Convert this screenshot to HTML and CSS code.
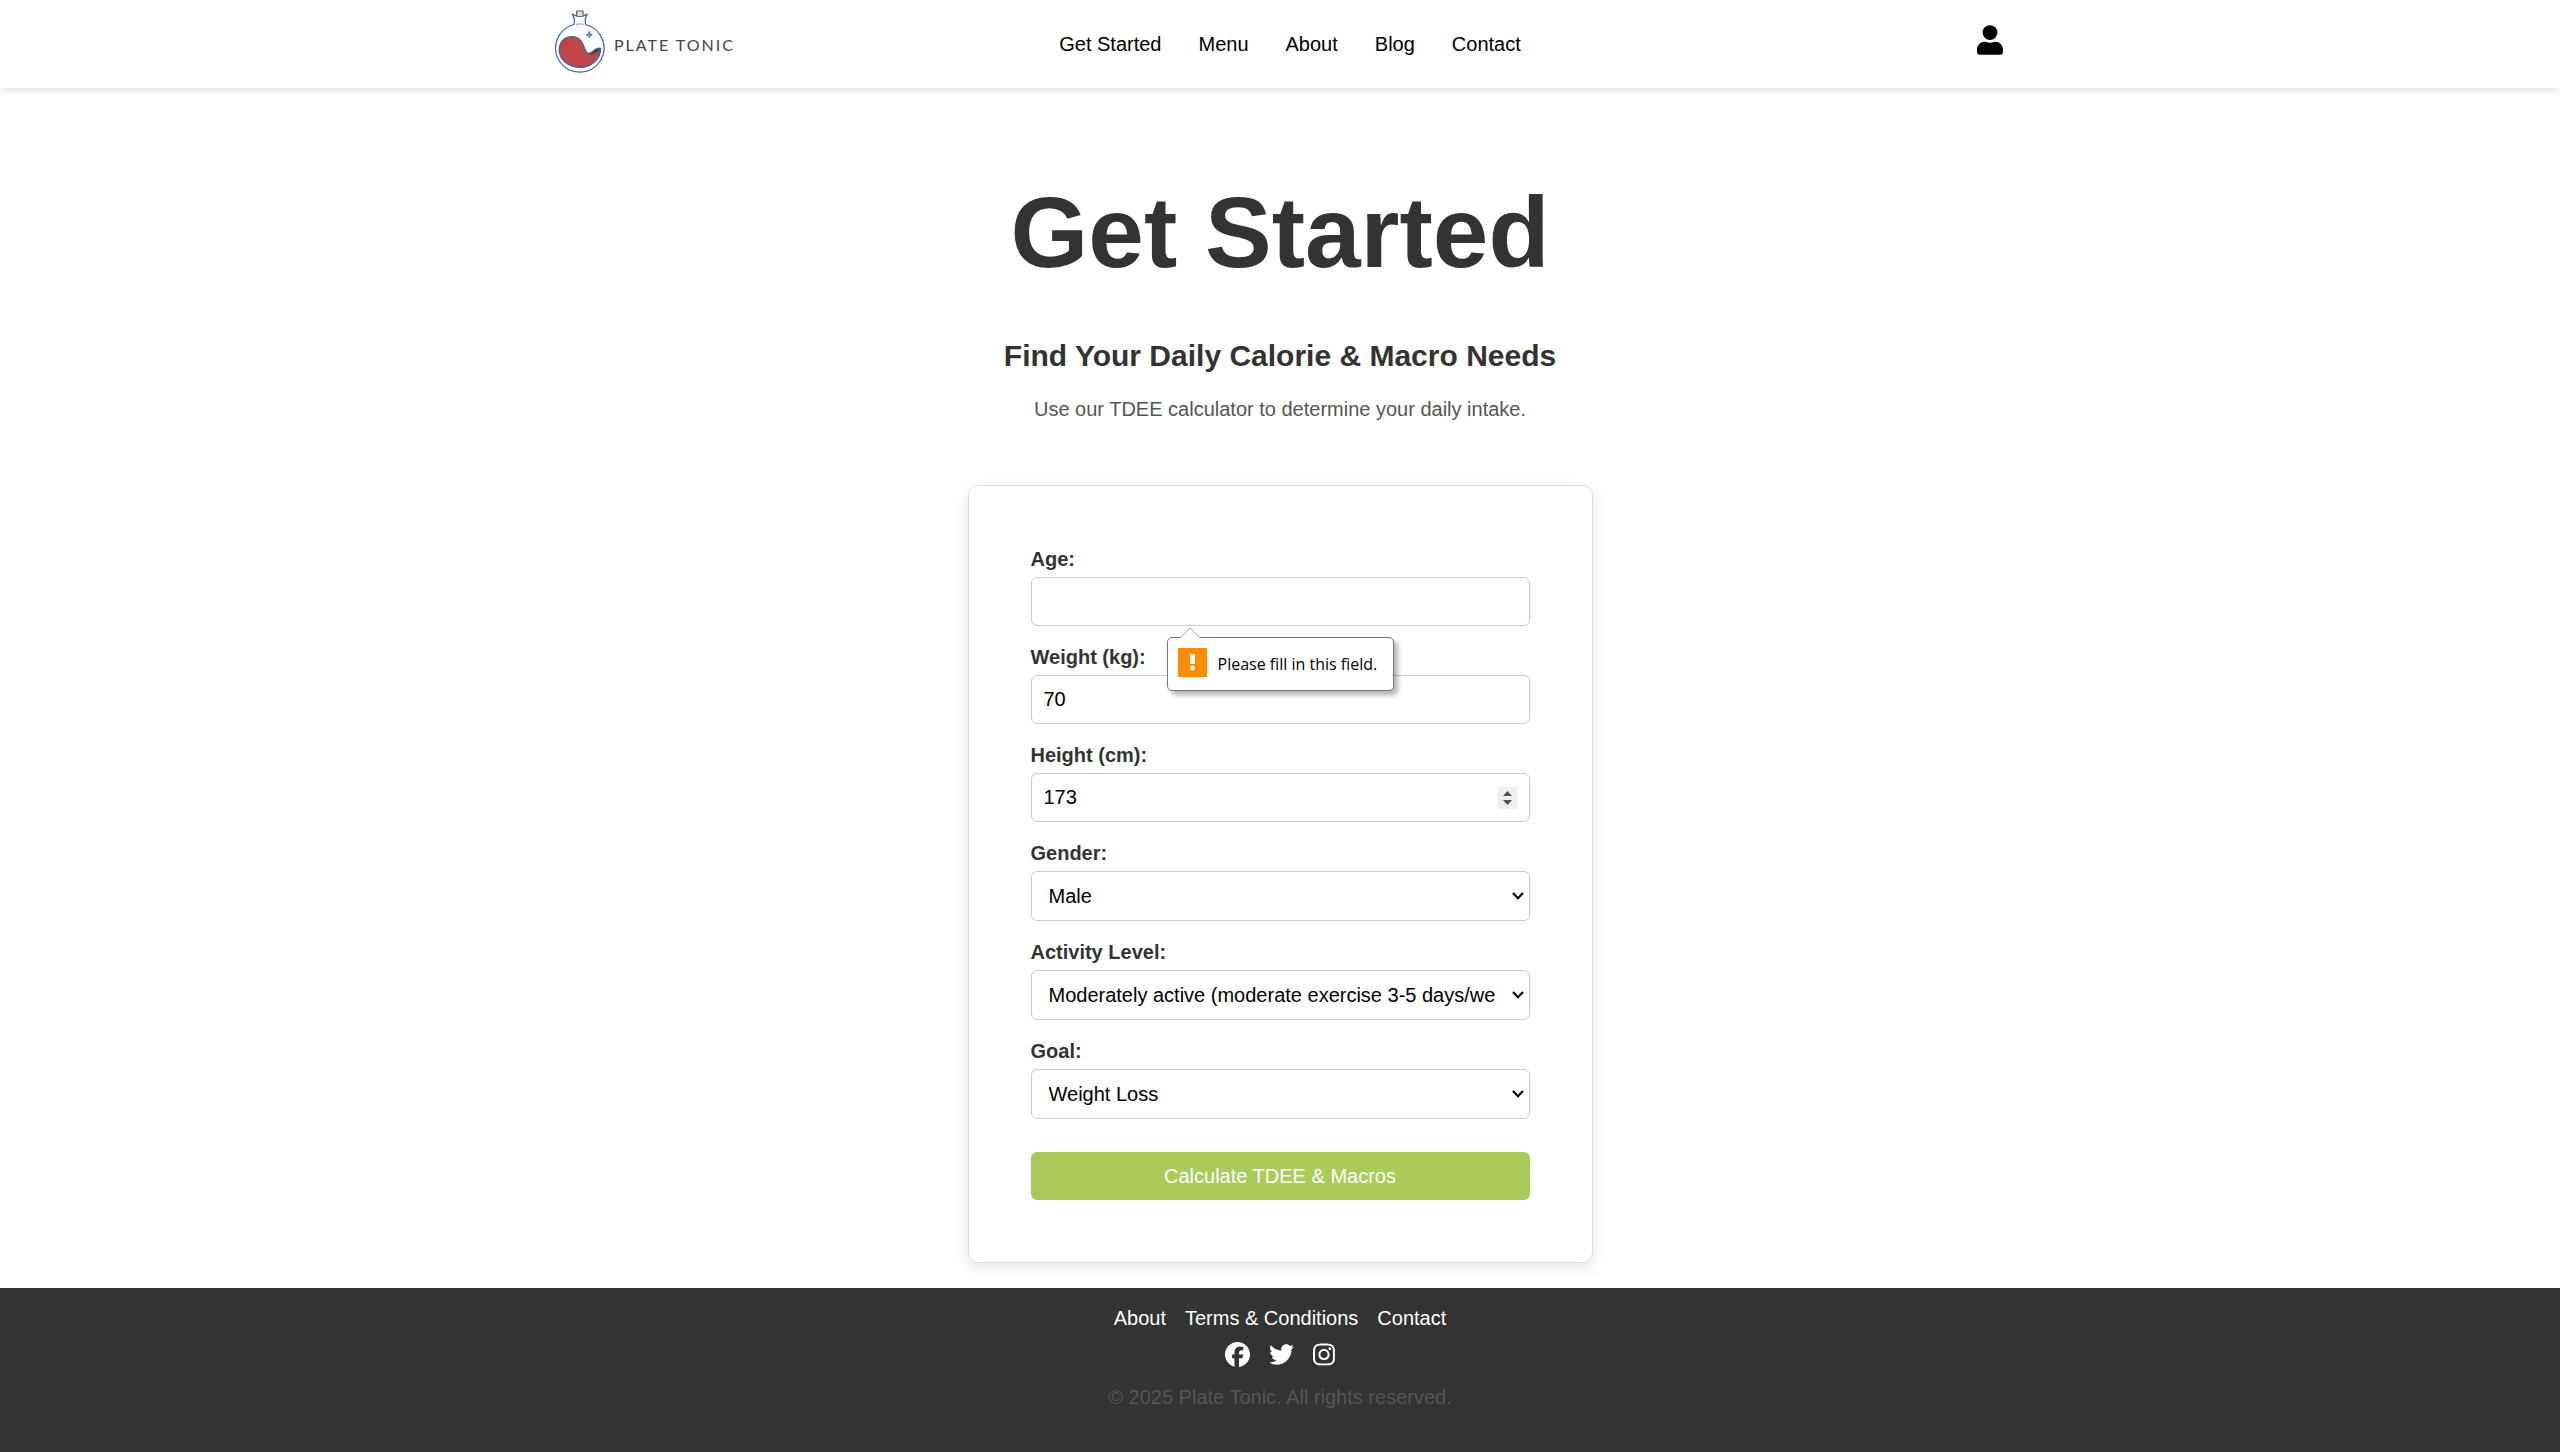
FILE: index.html
```html
<!DOCTYPE html>
<html lang="en">
<head>
<meta charset="utf-8">
<title>Get Started | Plate Tonic</title>
<meta name="viewport" content="width=device-width, initial-scale=1">
<link rel="stylesheet" href="styles.css">
</head>
<body>
<header class="site-header">
  <div class="header-inner">
    <a class="logo" href="#" aria-label="Plate Tonic">
      <svg width="200" height="68" viewBox="0 0 200 68">
        <g fill="none" stroke="#3a63a3" stroke-width="1.2" stroke-linecap="round" stroke-linejoin="round">
          <path d="M19 14.500C19.800 10 19.800 8 18 6L17.300 4Q21 6.500 24.800 6.500T32.200 4L31.500 6C29.800 8 29.800 10 30.600 14.500A24.200 24.200 0 1 1 19 14.500Z" fill="#fff"/>
          <path d="M21.700 6V1H28V6" fill="#f3dfba"/>
          <path d="M21.500 14.300Q25 13.300 28 14.300" stroke-width=".7"/>
          <path d="M4.200 40C4.200 32 9 26.700 17 26.700C30 26.700 28 42 34 44C39 45.500 44 42 45.600 38.500C46 48 37 57.400 25 57.400C13 57.400 4.200 49 4.200 40Z" fill="#bf4547"/>
          <path d="M32.500 43.300C38 43.500 38 37.700 45.600 38C44.500 42 38 46 32.500 43.300Z" fill="#7d3038" stroke-width=".8"/>
          <path d="M34.300 21.800L35.200 23.900L37.300 24.800L35.200 25.700L34.300 27.800L33.400 25.700L31.300 24.800L33.400 23.900Z" fill="#7fae86" stroke-width=".9"/>
        </g>
        <text class="logo-text" x="59" y="41">PLATE TONIC</text>
      </svg>
    </a>
    <nav class="main-nav" aria-label="Main">
      <a href="#">Get Started</a>
      <a href="#">Menu</a>
      <a href="#">About</a>
      <a href="#">Blog</a>
      <a href="#">Contact</a>
    </nav>
    <a class="account" href="#" aria-label="Account">
      <svg width="26" height="30" viewBox="0 0 448 512"><path d="M224 256A128 128 0 1 0 224 0a128 128 0 1 0 0 256zm89.600 32h-16.700c-22.200 10.200-46.900 16-72.900 16s-50.600-5.800-72.900-16h-16.700C60.200 288 0 348.200 0 422.400V464c0 26.500 21.500 48 48 48h352c26.500 0 48-21.500 48-48v-41.600c0-74.200-60.200-134.400-134.400-134.400z"/></svg>
    </a>
  </div>
</header>

<main class="page">
  <h1>Get Started</h1>
  <h2>Find Your Daily Calorie &amp; Macro Needs</h2>
  <p class="intro">Use our TDEE calculator to determine your daily intake.</p>

  <form class="card" novalidate>
    <div class="field">
      <label for="age">Age:</label>
      <input id="age" type="number" required aria-describedby="age-error">
      <div class="tooltip" id="age-error" role="alert">
        <svg class="tooltip-arrow" width="22" height="12" viewBox="0 0 22 12"><path d="M0 12L11 1L22 12Z" fill="#fff"/><path d="M1 11L11 1L21 11" fill="none" stroke="#aaa"/></svg>
        <svg width="29" height="29" viewBox="0 0 29 29"><rect width="29" height="29" rx="1" fill="#ff8c00"/><path d="M12 6h5v10h-5z" fill="#fff"/><circle cx="14.500" cy="20" r="2.400" fill="#fff"/></svg>
        <span>Please fill in this field.</span>
      </div>
    </div>
    <div class="field">
      <label for="weight">Weight (kg):</label>
      <input id="weight" type="number" value="70">
    </div>
    <div class="field">
      <label for="height">Height (cm):</label>
      <input id="height" class="with-spinner" type="number" value="173">
    </div>
    <div class="field">
      <label for="gender">Gender:</label>
      <select id="gender"><option>Male</option><option>Female</option></select>
    </div>
    <div class="field">
      <label for="activity">Activity Level:</label>
      <select id="activity"><option>Moderately active (moderate exercise 3-5 days/week)</option></select>
    </div>
    <div class="field">
      <label for="goal">Goal:</label>
      <select id="goal"><option>Weight Loss</option></select>
    </div>
    <button type="submit">Calculate TDEE &amp; Macros</button>
  </form>
</main>

<footer class="site-footer">
  <nav class="footer-nav" aria-label="Footer">
    <a href="#">About</a>
    <a href="#">Terms &amp; Conditions</a>
    <a href="#">Contact</a>
  </nav>
  <div class="social">
    <a href="#" aria-label="Facebook"><svg width="25" height="25" viewBox="0 0 512 512"><path d="M512 256C512 114.600 397.400 0 256 0S0 114.600 0 256c0 120 82.700 220.800 194.200 248.500V334.200h-52.800V256h52.800v-33.700c0-87.100 39.400-127.500 125-127.500 16.200 0 44.200 3.200 55.700 6.400V172c-6-.6-16.500-1-29.600-1-42 0-58.200 15.900-58.200 57.200V256h83.600l-14.400 78.200H287v175.900C413.800 494.800 512 386.900 512 256z"/></svg></a>
    <a href="#" aria-label="Twitter"><svg width="25" height="25" viewBox="0 0 512 512"><path d="M459.370 151.716c.325 4.548.325 9.097.325 13.645 0 138.720-105.583 298.558-298.558 298.558-59.452 0-114.680-17.219-161.137-47.106 8.447.974 16.568 1.299 25.340 1.299 49.055 0 94.213-16.568 130.274-44.832-46.132-.975-84.792-31.188-98.112-72.772 6.498.974 12.995 1.624 19.818 1.624 9.421 0 18.843-1.300 27.614-3.573-48.081-9.747-84.143-51.980-84.143-102.985v-1.299c13.969 7.797 30.214 12.670 47.431 13.319-28.264-18.843-46.781-51.005-46.781-87.391 0-19.492 5.197-37.360 14.294-52.954 51.655 63.675 129.300 105.258 216.365 109.807-1.624-7.797-2.599-15.918-2.599-24.040 0-57.828 46.782-104.934 104.934-104.934 30.213 0 57.502 12.670 76.670 33.137 23.715-4.548 46.456-13.320 66.599-25.340-7.798 24.366-24.366 44.833-46.132 57.827 21.117-2.273 41.584-8.122 60.426-16.243-14.292 20.791-32.161 39.308-52.628 54.253z"/></svg></a>
    <a href="#" aria-label="Instagram"><svg width="22" height="25" viewBox="0 0 448 512"><path d="M224.100 141c-63.600 0-114.900 51.300-114.900 114.900s51.300 114.900 114.900 114.900S339 319.500 339 255.900 287.700 141 224.100 141zm0 189.600c-41.100 0-74.700-33.500-74.700-74.700s33.500-74.700 74.700-74.700 74.700 33.500 74.700 74.700-33.600 74.700-74.700 74.700zm146.400-194.300c0 14.900-12 26.800-26.800 26.800-14.900 0-26.800-12-26.800-26.800s12-26.800 26.800-26.800 26.800 12 26.800 26.800zm76.100 27.200c-1.700-35.900-9.900-67.700-36.200-93.900-26.200-26.200-58-34.400-93.900-36.200-37-2.100-147.900-2.100-184.900 0-35.800 1.700-67.600 9.900-93.900 36.100s-34.400 58-36.200 93.900c-2.100 37-2.100 147.900 0 184.900 1.700 35.900 9.900 67.700 36.200 93.900s58 34.400 93.900 36.200c37 2.100 147.900 2.100 184.900 0 35.900-1.700 67.700-9.900 93.900-36.200 26.200-26.200 34.400-58 36.200-93.900 2.100-37 2.100-147.800 0-184.800zM398.800 388c-7.800 19.600-22.900 34.700-42.600 42.600-29.500 11.700-99.500 9-132.100 9s-102.700 2.600-132.100-9c-19.600-7.800-34.700-22.900-42.600-42.600-11.700-29.500-9-99.500-9-132.100s-2.600-102.700 9-132.100c7.800-19.600 22.900-34.700 42.600-42.600 29.500-11.700 99.500-9 132.100-9s102.700-2.600 132.100 9c19.600 7.800 34.700 22.900 42.600 42.600 11.700 29.500 9 99.500 9 132.100s2.700 102.700-9 132.100z"/></svg></a>
  </div>
  <p class="copyright">© 2025 Plate Tonic. All rights reserved.</p>
</footer>
</body>
</html>
```
FILE: styles.css
```css
* {
  box-sizing: border-box;
}

body {
  margin: 0;
  min-height: 100vh;
  display: flex;
  flex-direction: column;
  background: #fff;
  color: #333;
  font-family: "Liberation Sans", Arial, sans-serif;
  font-size: 20px;
  line-height: 23px;
}

a {
  color: inherit;
  text-decoration: none;
}

svg {
  display: block;
}

/* Header */
.site-header {
  background: #fff;
  box-shadow: 0 2px 8px rgba(0, 0, 0, 0.12);
}

.header-inner {
  display: grid;
  grid-template-columns: 1fr auto 1fr;
  align-items: center;
  width: 100%;
  max-width: 1490px;
  margin: 0 auto;
  padding: 10px 0 10px 20px;
}

.logo {
  justify-self: start;
}

.logo-text {
  fill: #444;
  font-family: Lato, sans-serif;
  font-size: 16px;
  letter-spacing: 2px;
}

.main-nav {
  display: flex;
  gap: 37px;
  color: #000;
}

.account {
  justify-self: end;
  margin: 0 22px 8px 0;
}

/* Page */
.page {
  display: flex;
  flex-direction: column;
  align-items: center;
  padding: 87px 20px 25px;
  text-align: center;
}

h1,
h2,
p {
  margin: 0;
}

h1 {
  font-size: 100px;
  line-height: 115px;
}

h2 {
  margin-top: 48px;
  font-size: 30px;
  line-height: 35px;
}

.intro {
  margin-top: 25px;
  color: #555;
}

/* Calculator */
.card {
  display: flex;
  flex-direction: column;
  gap: 20px;
  width: 100%;
  max-width: 625px;
  margin-top: 64px;
  padding: 62px;
  border: 1px solid #ddd;
  border-radius: 10px;
  box-shadow: 0 5px 15px rgba(0, 0, 0, 0.1);
  text-align: left;
}

.field {
  position: relative;
  display: flex;
  flex-direction: column;
  gap: 6px;
}

label {
  font-weight: bold;
}

input,
select {
  width: 100%;
  height: 49px;
  margin: 0;
  padding: 0 12px;
  border: 1px solid #ccc;
  border-radius: 6px;
  background-color: #fff;
  color: #000;
  font: inherit;
  appearance: none;
}

input {
  appearance: textfield;
}

.with-spinner {
  background-image: url("data:image/svg+xml,%3Csvg xmlns='http://www.w3.org/2000/svg' width='19' height='22'%3E%3Crect width='19' height='22' fill='%23efefef'/%3E%3Cpath d='M5 9L9.500 4L14 9ZM5 13L9.500 18L14 13Z' fill='%23505050'/%3E%3C/svg%3E");
  background-repeat: no-repeat;
  background-position: right 12px center;
}

select {
  height: 50px;
  padding: 0 34px 0 17px;
  background-image: url("data:image/svg+xml,%3Csvg xmlns='http://www.w3.org/2000/svg' width='12' height='8'%3E%3Cpath d='M1 1L6 6.200L11 1' fill='none' stroke='%23000' stroke-width='2.200'/%3E%3C/svg%3E");
  background-repeat: no-repeat;
  background-position: right 5px center;
}

button {
  height: 48px;
  margin-top: 13px;
  padding: 0;
  border: 0;
  border-radius: 6px;
  background: #a8cb5a;
  color: #fff;
  font: inherit;
}

/* Validation message that hangs below the field */
.tooltip {
  position: absolute;
  top: 100%;
  left: 136px;
  z-index: 1;
  display: flex;
  align-items: flex-start;
  gap: 11px;
  min-width: 227px;
  height: 54px;
  margin-top: 11px;
  padding: 10px 10px 0;
  border: 1px solid #777;
  border-radius: 5px;
  background: #fff;
  box-shadow: 4px 4px 5px rgba(0, 0, 0, 0.3);
  color: #000;
  font-family: "Open Sans", "Noto Sans", sans-serif;
  font-size: 16px;
  line-height: 33px;
  white-space: nowrap;
}

.tooltip-arrow {
  position: absolute;
  top: -11px;
  left: 11px;
}

/* Footer */
.site-footer {
  flex: 1;
  display: flex;
  flex-direction: column;
  align-items: center;
  padding: 19px 20px 43px;
  background: #333;
  color: #fff;
}

.footer-nav,
.social {
  display: flex;
  gap: 19px;
}

.social {
  margin-top: 12px;
  fill: #fff;
}

.copyright {
  margin-top: 19px;
  color: #555;
}
```
